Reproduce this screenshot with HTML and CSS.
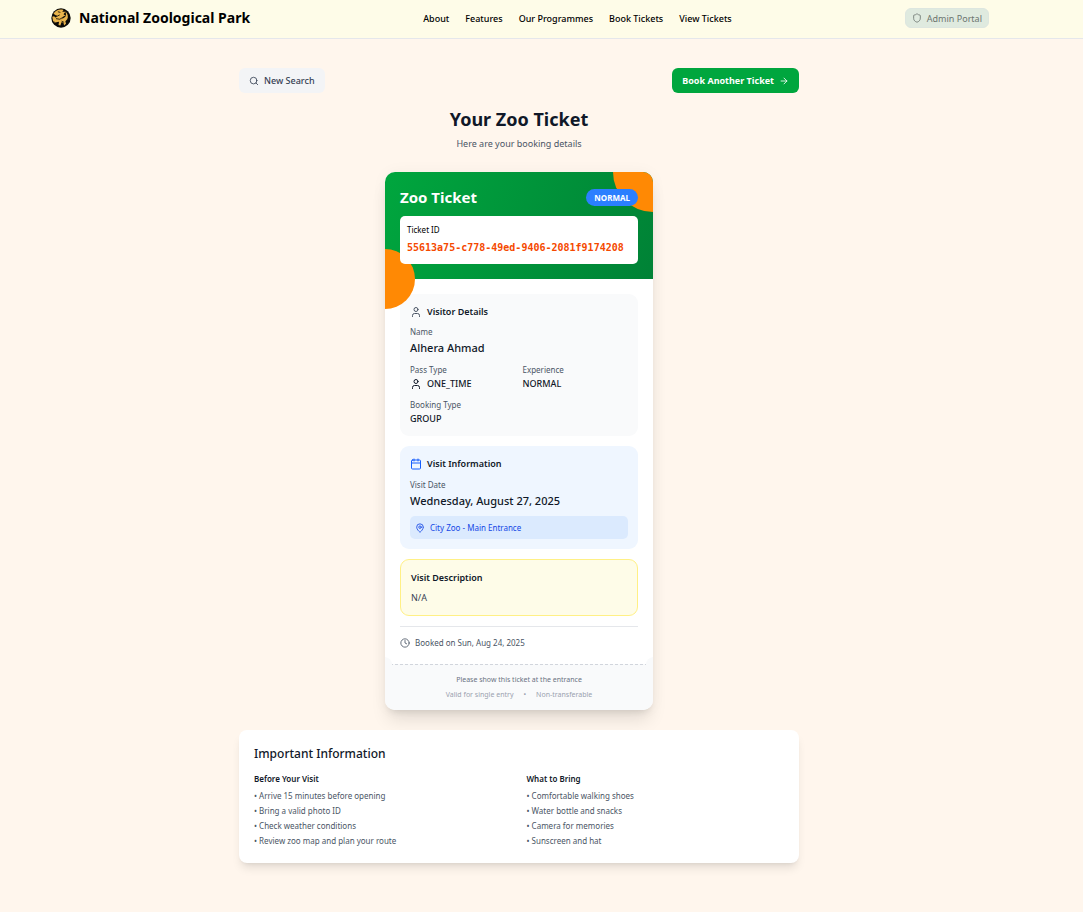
FILE: index.html
```html
<!DOCTYPE html>
<html lang="en">
<head>
<meta charset="utf-8">
<meta name="viewport" content="width=device-width, initial-scale=1">
<title>National Zoological Park</title>
<link rel="stylesheet" href="styles.css">
</head>
<body>
<svg class="sprite" aria-hidden="true">
  <symbol id="user" viewBox="0 0 24 24"><circle cx="12" cy="7" r="4"/><path d="M19 21v-2a4 4 0 0 0-4-4H9a4 4 0 0 0-4 4v2"/></symbol>
</svg>
<header class="header">
  <div class="header-inner">
    <a class="brand" href="#">
      <svg class="logo" viewBox="0 0 32 32" aria-hidden="true">
        <circle cx="16" cy="16" r="15.5" fill="#0b0a08"/>
        <path fill="#e9b44c" d="M4 9c4-6 10-8 16-6l-2 3 5 0-3 4 3 2-4 2-1 4-4 2 3 4-5-2-5 1-4-4-1-5 3-1 2 2 3-1-3-2z"/>
        <path fill="#e9b44c" d="M23 5c4 4 5 9 3 13l-3 3 1 4-3 3-1-4-3-2-2 6-3-1 1-6-4-3-4 1 1 5-3-4 1-3 6-1 7 2 6-4 1-4z"/>
        <path fill="none" stroke="#0b0a08" stroke-width="1.300" d="M5 11l5 2 4-2M11 6l4 1M8 17l6 1 5-3M17 21l4 2"/>
      </svg>
      <span>National Zoological Park</span>
    </a>
    <nav class="nav" aria-label="Main">
      <a href="#">About</a><a href="#">Features</a><a href="#">Our Programmes</a><a href="#">Book Tickets</a><a href="#">View Tickets</a>
    </nav>
    <button class="btn btn-admin" type="button">
      <svg class="icon icon-sm" viewBox="0 0 24 24"><path d="M20 13c0 5-3.500 7.500-7.660 8.950a1 1 0 0 1-.67-.01C7.500 20.500 4 18 4 13V6a1 1 0 0 1 1-1c2 0 4.500-1.200 6.240-2.720a1.170 1.170 0 0 1 1.520 0C14.510 3.810 17 5 19 5a1 1 0 0 1 1 1z"/></svg>
      Admin Portal
    </button>
  </div>
</header>
<main class="main">
  <div class="actions">
    <button class="btn btn-search" type="button">
      <svg class="icon icon-sm" viewBox="0 0 24 24"><circle cx="11" cy="11" r="8"/><path d="m21 21-4.300-4.300"/></svg>
      New Search
    </button>
    <button class="btn btn-book" type="button">
      Book Another Ticket
      <svg class="icon icon-sm" viewBox="0 0 24 24"><path d="M5 12h14M12 5l7 7-7 7"/></svg>
    </button>
  </div>
  <div class="intro">
    <h1>Your Zoo Ticket</h1>
    <p>Here are your booking details</p>
  </div>

  <article class="ticket">
    <div class="ticket-head">
      <div class="ticket-title">
        <h2>Zoo Ticket</h2>
        <span class="badge">NORMAL</span>
      </div>
      <div class="ticket-id">
        <span>Ticket ID</span>
        <code>55613a75-c778-49ed-9406-2081f9174208</code>
      </div>
    </div>
    <div class="ticket-body">
      <section class="panel visitor">
        <h3><svg class="icon icon-gray"><use href="#user"/></svg>Visitor Details</h3>
        <dl class="details">
          <div class="wide"><dt>Name</dt><dd class="large">Alhera Ahmad</dd></div>
          <div><dt>Pass Type</dt><dd><svg class="icon"><use href="#user"/></svg>ONE_TIME</dd></div>
          <div><dt>Experience</dt><dd>NORMAL</dd></div>
          <div><dt>Booking Type</dt><dd>GROUP</dd></div>
        </dl>
      </section>
      <section class="panel visit">
        <h3><svg class="icon icon-blue" viewBox="0 0 24 24"><path d="M8 2v4M16 2v4M3 10h18"/><rect x="3" y="4" width="18" height="18" rx="2"/></svg>Visit Information</h3>
        <dl class="details">
          <div class="wide"><dt>Visit Date</dt><dd class="large">Wednesday, August 27, 2025</dd></div>
        </dl>
        <p class="place"><svg class="icon icon-sm" viewBox="0 0 24 24"><path d="M20 10c0 4.990-5.540 10.190-7.400 11.800a1 1 0 0 1-1.200 0C9.540 20.190 4 14.990 4 10a8 8 0 0 1 16 0"/><circle cx="12" cy="10" r="3"/></svg>City Zoo - Main Entrance</p>
      </section>
      <section class="panel description">
        <h3>Visit Description</h3>
        <p>N/A</p>
      </section>
      <p class="booked"><svg class="icon icon-sm" viewBox="0 0 24 24"><circle cx="12" cy="12" r="10"/><path d="M12 6v6l4 2"/></svg>Booked on Sun, Aug 24, 2025</p>
    </div>
    <footer class="ticket-foot">
      <p>Please show this ticket at the entrance</p>
      <p class="terms"><span>Valid for single entry</span><span>•</span><span>Non-transferable</span></p>
    </footer>
  </article>

  <section class="info">
    <h2>Important Information</h2>
    <div class="info-grid">
      <div>
        <h3>Before Your Visit</h3>
        <ul><li>Arrive 15 minutes before opening</li><li>Bring a valid photo ID</li><li>Check weather conditions</li><li>Review zoo map and plan your route</li></ul>
      </div>
      <div>
        <h3>What to Bring</h3>
        <ul><li>Comfortable walking shoes</li><li>Water bottle and snacks</li><li>Camera for memories</li><li>Sunscreen and hat</li></ul>
      </div>
    </div>
  </section>
</main>
</body>
</html>
```
FILE: styles.css
```css
* { box-sizing: border-box; }
body {
  margin: 0;
  min-height: 100vh;
  background: #fff6ed;
  color: #101828;
  font: 10px/15px "Noto Sans", "Open Sans", sans-serif;
}
h1, h2, h3, p, ul, dl, dd { margin: 0; padding: 0; }
a { color: inherit; text-decoration: none; }
button { font: inherit; border: 0; cursor: pointer; }
.sprite { position: absolute; width: 0; height: 0; }

.icon {
  width: 12px;
  height: 12px;
  flex: none;
  fill: none;
  stroke: currentColor;
  stroke-width: 2;
  stroke-linecap: round;
  stroke-linejoin: round;
}
.icon-sm { width: 10px; height: 10px; }
.icon-gray { color: #4a5565; }
.icon-blue { color: #155dfc; }

.header { background: #fefce8; border-bottom: 1px solid #e5e7eb; }
.header-inner {
  display: flex;
  align-items: center;
  justify-content: space-between;
  padding: 7px 94px 9px 51px;
}
.brand {
  display: flex;
  align-items: center;
  gap: 8px;
  color: #000;
  font-size: 14px;
  font-weight: 700;
  line-height: 22px;
}
.logo { width: 20px; height: 20px; }
.nav { display: flex; gap: 16px; color: #000; font-size: 9px; font-weight: 500; }
.btn {
  display: flex;
  align-items: center;
  gap: 5px;
  height: 25px;
  padding: 0 10px;
  border-radius: 6px;
  font-size: 9px;
  font-weight: 500;
}
.btn-admin { height: 20px; padding: 0 6px; background: #dfeadf; color: #6c7570; border: 1px solid #dde6e0; font-weight: 400; }
.btn-search { background: #f3f4f6; color: #364153; }
.btn-book { background: #00a63e; color: #fff; font-weight: 700; }

.main { padding: 29px 45px 48px 0; }
.actions, .info { width: 100%; max-width: 560px; margin: 0 auto; }
.actions { display: flex; justify-content: space-between; }
.intro { padding: 14px 0 21px; text-align: center; color: #4a5565; font-size: 9px; }
.intro h1 { margin-bottom: 5px; color: #101828; font-size: 18px; line-height: 24px; font-weight: 700; }

.ticket {
  width: 268px;
  max-width: 100%;
  margin: 0 auto 20px;
  overflow: hidden;
  border-radius: 10px;
  background: #fff;
  box-shadow: 0 13px 17px -3px rgb(0 0 0 / 10%), 0 5px 7px -4px rgb(0 0 0 / 10%), 0 0 16px rgb(0 0 0 / 4%);
}
.ticket-head {
  position: relative;
  padding: 15px;
  background: linear-gradient(110deg, #00a63e, #008236);
}
.ticket-head::before, .ticket-head::after { content: ""; position: absolute; border-radius: 50%; background: #ff8904; }
.ticket-head::before { top: -40px; right: -40px; width: 80px; height: 80px; }
.ticket-head::after { bottom: -30px; left: -30px; width: 60px; height: 60px; }
.ticket-title, .ticket-id { position: relative; z-index: 1; }
.ticket-title { display: flex; align-items: center; justify-content: space-between; margin-bottom: 9px; }
.ticket-title h2 { color: #fff; font-size: 15px; line-height: 20px; font-weight: 700; }
.badge { padding: 0 8px; border-radius: 10px; background: #2b7fff; color: #fff; font-size: 8px; line-height: 17px; font-weight: 700; }
.ticket-id {
  display: flex;
  flex-direction: column;
  gap: 3px;
  padding: 6px 7px 9px;
  border-radius: 5px;
  background: #fff;
  color: #000;
  font-size: 8px;
}
.ticket-id code { color: #f54900; font: 700 10px/15px "DejaVu Sans Mono", "Liberation Mono", monospace; }

.ticket-body { display: flex; flex-direction: column; gap: 10px; padding: 15px 15px 14px; }
.panel { padding: 10px; border-radius: 9px; }
.panel h3 { display: flex; align-items: center; gap: 5px; font-size: 9px; line-height: 15px; font-weight: 600; }
.visitor { background: #f9fafb; }
.visit { background: #eff6ff; }
.description { background: #fefce8; border: 1px solid #fff085; }
.description p { margin-top: 5px; color: #364153; font-size: 9px; }
.details { display: grid; grid-template-columns: 1fr 1fr; gap: 7px; margin-top: 6px; }
.visit .details { margin-top: 7px; }
.details .wide { grid-column: 1 / -1; }
.details dt { color: #4a5565; font-size: 8px; line-height: 14px; }
.details dd { display: flex; align-items: center; gap: 5px; font-size: 9px; line-height: 14px; font-weight: 500; }
.details .large { font-size: 11px; line-height: 17px; }
.place {
  display: flex;
  align-items: center;
  gap: 5px;
  margin-top: 7px;
  padding: 4px 5px;
  border-radius: 5px;
  background: #dbeafe;
  color: #1447e6;
  font-size: 8px;
}
.booked {
  display: flex;
  align-items: center;
  gap: 5px;
  padding-top: 8px;
  border-top: 1px solid #e5e7eb;
  color: #4a5565;
  font-size: 8px;
}
.ticket-foot {
  position: relative;
  padding: 7px 15px 8px;
  background: #f9fafb;
  border-top: 1px dashed #d1d5dc;
  color: #6a7282;
  font-size: 7px;
  text-align: center;
}
.ticket-foot::before, .ticket-foot::after {
  content: "";
  position: absolute;
  top: -8px;
  width: 15px;
  height: 15px;
  border-radius: 50%;
  background: #f9fafb;
}
.ticket-foot::before { left: -8px; }
.ticket-foot::after { right: -8px; }
.terms { display: flex; justify-content: center; gap: 10px; color: #99a1af; }

.info {
  padding: 15px;
  border-radius: 8px;
  background: #fff;
  box-shadow: 0 7px 10px -2px rgb(0 0 0 / 10%), 0 3px 4px -3px rgb(0 0 0 / 10%);
}
.info h2 { margin-bottom: 8px; font-size: 12px; line-height: 18px; font-weight: 500; }
.info-grid { display: grid; grid-template-columns: 1fr 1fr; gap: 15px; }
.info-grid h3 { margin-bottom: 2px; font-size: 8px; line-height: 15px; font-weight: 600; }
.info-grid ul { list-style: none; color: #4a5565; font-size: 8px; }
.info-grid li::before { content: "• "; }
```
